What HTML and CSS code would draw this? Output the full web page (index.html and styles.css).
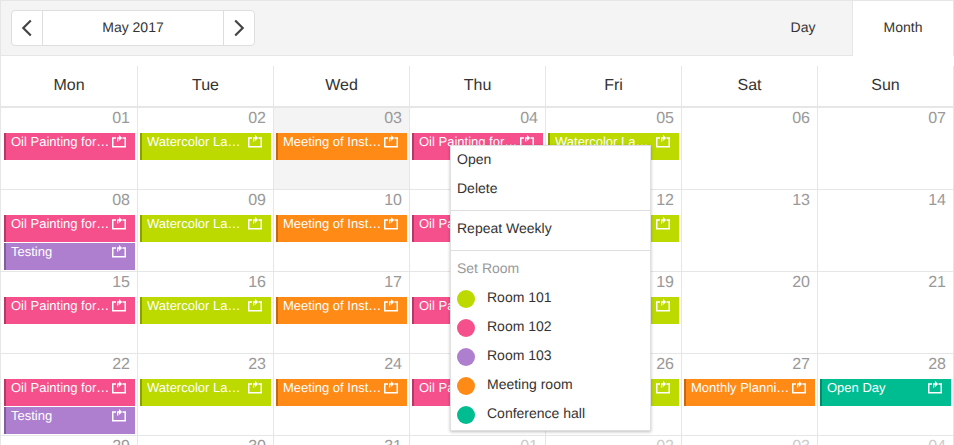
FILE: index.html
```html
<!DOCTYPE html>
<html lang="en">
<head>
    <meta charset="UTF-8">
    <title>Room Calendar</title>
    <link rel="stylesheet" href="styles.css">
</head>
<body>
    <svg class="defs" width="0" height="0">
        <symbol id="repeat" viewBox="0 0 14 13">
            <path d="M4 3H.75V11.75H13.25V3H10.5" fill="none" stroke="#fff" stroke-width="1.5"/>
            <path d="M5 6.5V2.3H7V0L10.2 3L7 6V3.8H6.3V6.5Z" fill="#fff"/>
        </symbol>
    </svg>
    <div class="scheduler">
        <div class="toolbar">
            <div class="nav">
                <button class="nav-btn"><svg width="12" height="18" viewBox="0 0 12 18"><path d="M9.8 1.5L2.3 9L9.8 16.5" fill="none" stroke="#444" stroke-width="2.2"/></svg></button>
                <div class="nav-date">May 2017</div>
                <button class="nav-btn"><svg width="12" height="18" viewBox="0 0 12 18"><path d="M2.2 1.5L9.7 9L2.2 16.5" fill="none" stroke="#444" stroke-width="2.2"/></svg></button>
            </div>
            <div class="tabs">
                <div class="tab">Day</div>
                <div class="tab active">Month</div>
            </div>
        </div>
        <div class="days">
            <div class="day-name">Mon</div>
            <div class="day-name">Tue</div>
            <div class="day-name">Wed</div>
            <div class="day-name">Thu</div>
            <div class="day-name">Fri</div>
            <div class="day-name">Sat</div>
            <div class="day-name">Sun</div>
        </div>
        <div class="weeks">
            <div class="cell"><div class="num">01</div><div class="event pink"><span>Oil Painting for Beginners</span><svg><use href="#repeat"/></svg></div></div>
            <div class="cell"><div class="num">02</div><div class="event green"><span>Watercolor Landscape</span><svg><use href="#repeat"/></svg></div></div>
            <div class="cell today"><div class="num">03</div><div class="event orange"><span>Meeting of Instructors</span><svg><use href="#repeat"/></svg></div></div>
            <div class="cell"><div class="num">04</div><div class="event pink"><span>Oil Painting for Beginners</span><svg><use href="#repeat"/></svg></div></div>
            <div class="cell"><div class="num">05</div><div class="event green"><span>Watercolor Landscape</span><svg><use href="#repeat"/></svg></div></div>
            <div class="cell"><div class="num">06</div></div>
            <div class="cell"><div class="num">07</div></div>

            <div class="cell"><div class="num">08</div><div class="event pink"><span>Oil Painting for Beginners</span><svg><use href="#repeat"/></svg></div><div class="event purple"><span>Testing</span><svg><use href="#repeat"/></svg></div></div>
            <div class="cell"><div class="num">09</div><div class="event green"><span>Watercolor Landscape</span><svg><use href="#repeat"/></svg></div></div>
            <div class="cell"><div class="num">10</div><div class="event orange"><span>Meeting of Instructors</span><svg><use href="#repeat"/></svg></div></div>
            <div class="cell"><div class="num">11</div><div class="event pink"><span>Oil Painting for Beginners</span><svg><use href="#repeat"/></svg></div></div>
            <div class="cell"><div class="num">12</div><div class="event green"><span>Watercolor Landscape</span><svg><use href="#repeat"/></svg></div></div>
            <div class="cell"><div class="num">13</div></div>
            <div class="cell"><div class="num">14</div></div>

            <div class="cell"><div class="num">15</div><div class="event pink"><span>Oil Painting for Beginners</span><svg><use href="#repeat"/></svg></div></div>
            <div class="cell"><div class="num">16</div><div class="event green"><span>Watercolor Landscape</span><svg><use href="#repeat"/></svg></div></div>
            <div class="cell"><div class="num">17</div><div class="event orange"><span>Meeting of Instructors</span><svg><use href="#repeat"/></svg></div></div>
            <div class="cell"><div class="num">18</div><div class="event pink"><span>Oil Painting for Beginners</span><svg><use href="#repeat"/></svg></div></div>
            <div class="cell"><div class="num">19</div><div class="event green"><span>Watercolor Landscape</span><svg><use href="#repeat"/></svg></div></div>
            <div class="cell"><div class="num">20</div></div>
            <div class="cell"><div class="num">21</div></div>

            <div class="cell"><div class="num">22</div><div class="event pink"><span>Oil Painting for Beginners</span><svg><use href="#repeat"/></svg></div><div class="event purple"><span>Testing</span><svg><use href="#repeat"/></svg></div></div>
            <div class="cell"><div class="num">23</div><div class="event green"><span>Watercolor Landscape</span><svg><use href="#repeat"/></svg></div></div>
            <div class="cell"><div class="num">24</div><div class="event orange"><span>Meeting of Instructors</span><svg><use href="#repeat"/></svg></div></div>
            <div class="cell"><div class="num">25</div><div class="event pink"><span>Oil Painting for Beginners</span><svg><use href="#repeat"/></svg></div></div>
            <div class="cell"><div class="num">26</div><div class="event green"><span>Watercolor Landscape</span><svg><use href="#repeat"/></svg></div></div>
            <div class="cell"><div class="num">27</div><div class="event orange"><span>Monthly Planning Session</span><svg><use href="#repeat"/></svg></div></div>
            <div class="cell"><div class="num">28</div><div class="event teal"><span>Open Day</span><svg><use href="#repeat"/></svg></div></div>

            <div class="cell"><div class="num">29</div></div>
            <div class="cell"><div class="num">30</div></div>
            <div class="cell"><div class="num">31</div></div>
            <div class="cell other"><div class="num">01</div></div>
            <div class="cell other"><div class="num">02</div></div>
            <div class="cell other"><div class="num">03</div></div>
            <div class="cell other"><div class="num">04</div></div>
        </div>
        <!-- Контекстное меню -->
        <div class="menu">
            <div class="menu-item">Open</div>
            <div class="menu-item">Delete</div>
            <div class="menu-sep"></div>
            <div class="menu-item">Repeat Weekly</div>
            <div class="menu-sep"></div>
            <div class="menu-item muted">Set Room</div>
            <div class="menu-item room"><i class="dot green"></i>Room 101</div>
            <div class="menu-item room"><i class="dot pink"></i>Room 102</div>
            <div class="menu-item room"><i class="dot purple"></i>Room 103</div>
            <div class="menu-item room"><i class="dot orange"></i>Meeting room</div>
            <div class="menu-item room"><i class="dot teal"></i>Conference hall</div>
        </div>
    </div>
</body>
</html>
```
FILE: styles.css
```css
html, body {
    margin: 0;
    height: 445px;
    overflow: hidden;
    background-color: #fff;
    font-family: 'Liberation Sans', Arial, sans-serif;
    text-rendering: geometricPrecision;
    color: #333;
}
.defs {
    position: absolute;
}
.scheduler {
    position: relative;
    width: 954px;
    height: 445px;
    overflow: hidden;
    border-top: 1px solid #e6e6e6;
    border-left: 1px solid #e6e6e6;
    box-sizing: border-box;
}
.toolbar {
    display: flex;
    justify-content: space-between;
    align-items: flex-start;
    height: 54px;
    background-color: #f4f4f4;
    border-bottom: 1px solid #e6e6e6;
    padding-left: 10px;
}
.nav {
    display: flex;
    height: 34px;
    margin-top: 9px;
    background-color: #fff;
    border: 1px solid #dedede;
    border-radius: 4px;
    font-size: 14px;
}
.nav-btn {
    width: 30px;
    padding: 0;
    border: 0;
    background: none;
    display: flex;
    align-items: center;
    justify-content: center;
}
.nav-date {
    width: 180px;
    line-height: 33px;
    text-align: center;
    border-left: 1px solid #dedede;
    border-right: 1px solid #dedede;
}
.tabs {
    display: flex;
}
.tab {
    width: 98px;
    height: 54px;
    line-height: 53px;
    font-size: 14px;
    text-align: center;
}
.tab.active {
    width: 102px;
    height: 55px;
    background-color: #fff;
    border-left: 1px solid #e6e6e6;
    border-right: 1px solid #e6e6e6;
    box-sizing: border-box;
}
.days,
.weeks {
    display: grid;
    grid-template-columns: 137px repeat(6, 136px);
}
.days {
    margin-top: 10px;
    border-bottom: 2px solid #e6e6e6;
}
.day-name {
    height: 40px;
    line-height: 40px;
    font-size: 16px;
    text-align: center;
    border-right: 1px solid #e6e6e6;
}
.weeks {
    grid-auto-rows: 82px;
}
.cell {
    box-sizing: border-box;
    border-right: 1px solid #e6e6e6;
    border-bottom: 1px solid #e6e6e6;
}
.cell.today {
    background-color: #f4f4f4;
}
.num {
    height: 25px;
    padding-right: 7px;
    font-size: 16px;
    line-height: 21px;
    text-align: right;
    color: #999;
}
.other .num {
    color: #ccc;
}
.event {
    display: flex;
    width: 131px;
    height: 27px;
    box-sizing: border-box;
    margin: 0 2px 1px auto;
    padding: 0 9px 0 5px;
    border-left: 2px solid;
    font-size: 13px;
    line-height: 17px;
    color: #fff;
}
.event span {
    flex: 1;
    min-width: 0;
    overflow: hidden;
    white-space: nowrap;
    text-overflow: ellipsis;
}
.event svg {
    flex: none;
    width: 14px;
    height: 13px;
    margin: 2px 0 0 1px;
}
.pink { background-color: #f54f8c; border-color: #b23a67; }
.green { background-color: #bcd900; border-color: #8a9f00; }
.orange { background-color: #ff8a15; border-color: #c4690f; }
.purple { background-color: #ae7fcf; border-color: #805e99; }
.teal { background-color: #00bd91; border-color: #008a6a; }
.menu {
    position: absolute;
    left: 449px;
    top: 144px;
    width: 201px;
    height: 286px;
    box-sizing: border-box;
    background-color: #fff;
    border: 1px solid #e0e0e0;
    box-shadow: 0 1px 3px rgba(0,0,0,0.25);
    font-size: 14px;
}
.menu-item {
    height: 29px;
    padding-left: 6px;
    line-height: 26px;
}
.menu-item.muted {
    color: #999;
}
.menu-item.room {
    display: flex;
    align-items: flex-start;
    gap: 12px;
}
.menu-sep {
    height: 1px;
    margin: 6px 0 4px;
    background-color: #dedede;
}
.dot {
    width: 18px;
    height: 18px;
    margin-top: 6px;
    border-radius: 50%;
}
```
